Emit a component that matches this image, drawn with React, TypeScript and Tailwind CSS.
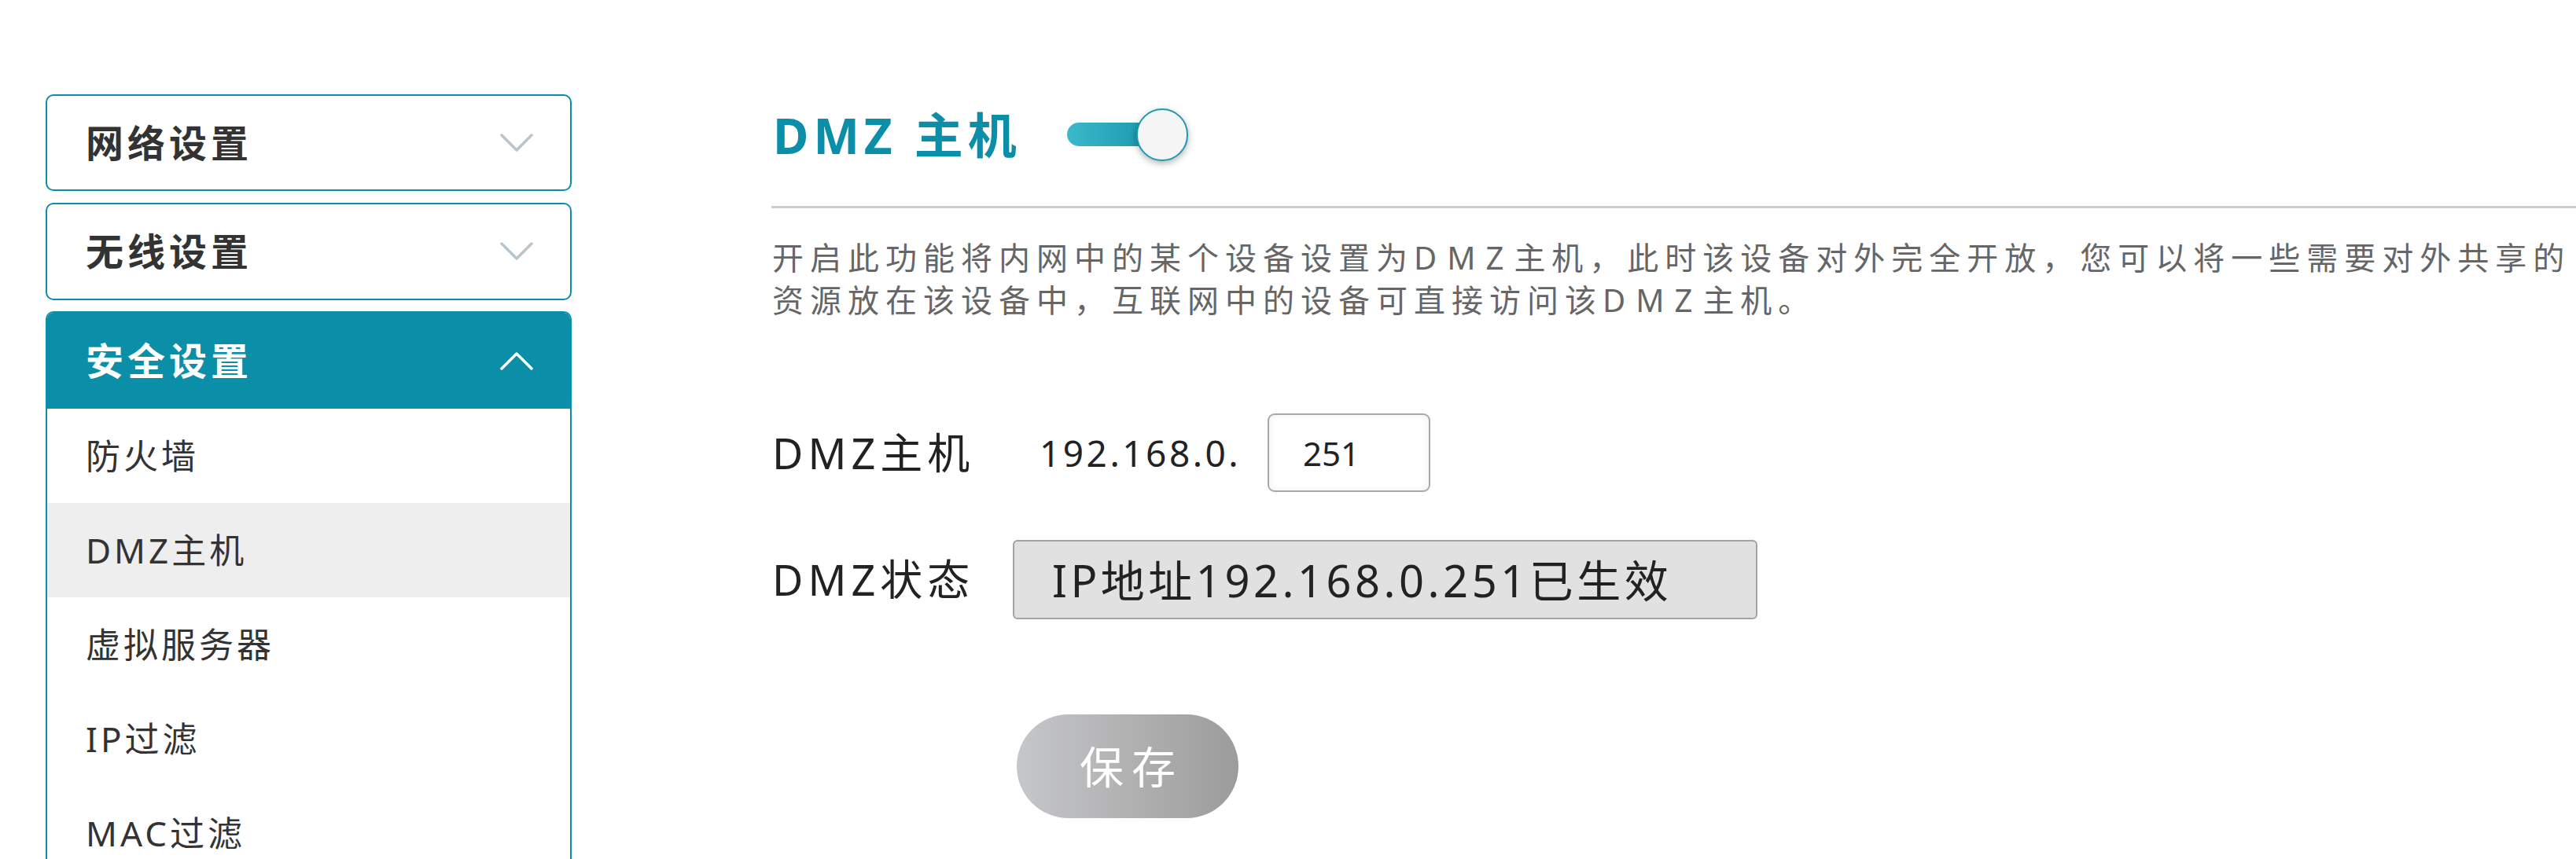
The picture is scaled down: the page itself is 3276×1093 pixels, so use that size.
import React from "react";

const FONT = { fontFamily: '"Noto Sans", "Noto Sans CJK SC", sans-serif' };

// Chevron drawn as a simple polyline
const Chevron: React.FC<{ up?: boolean; color: string }> = ({ up, color }) => (
  <svg width="42" height="24" viewBox="0 0 42 24" fill="none">
    <path
      d={up ? "M2 22 L21 3 L40 22" : "M2 2 L21 21 L40 2"}
      stroke={color}
      strokeWidth="3.5"
      strokeLinecap="round"
      strokeLinejoin="round"
    />
  </svg>
);

const menuItems = ["防火墙", "DMZ主机", "虚拟服务器", "IP过滤", "MAC过滤"];

const Sidebar: React.FC = () => (
  <div className="w-[727px] shrink-0 pl-[58px] pt-[120px] flex flex-col">
    <div className="h-[123px] border-2 border-[#0b8ea8] rounded-[10px] flex items-center justify-between pl-[49px] pr-[47px] bg-white">
      <span className="text-[48px] font-bold tracking-[5px] text-[#333]">网络设置</span>
      <Chevron color="#b9c5cd" />
    </div>
    <div className="mt-[15px] h-[124px] border-2 border-[#0b8ea8] rounded-[10px] flex items-center justify-between pl-[49px] pr-[47px] bg-white">
      <span className="text-[48px] font-bold tracking-[5px] text-[#333]">无线设置</span>
      <Chevron color="#b9c5cd" />
    </div>
    <div className="mt-[14px] flex-1 border-x-2 border-t-2 border-[#0b8ea8] rounded-t-[10px] overflow-hidden">
      <div className="h-[122px] bg-[#0b8ea8] flex items-center justify-between pl-[49px] pr-[47px]">
        <span className="text-[48px] font-bold tracking-[5px] text-white">安全设置</span>
        <Chevron up color="#ffffff" />
      </div>
      {menuItems.map((item) => (
        <div
          key={item}
          className={
            "h-[120px] flex items-center pl-[49px] " +
            (item === "DMZ主机" ? "bg-[#eeeeee]" : "bg-white")
          }
        >
          <span className="text-[44px] tracking-[4px] text-[#333]">{item}</span>
        </div>
      ))}
    </div>
  </div>
);

const Toggle: React.FC = () => (
  <div className="relative w-[154px] h-[68px] ml-[58px]">
    <div className="absolute left-0 top-[18px] w-[120px] h-[30px] rounded-full bg-linear-to-r from-[#3bb8ca] to-[#1394aa]" />
    <div className="absolute right-0 top-0 w-[66px] h-[67px] rounded-full bg-[#f5f5f5] border-2 border-[#1d9ab0] shadow-[0_3px_8px_rgba(0,0,0,0.3)]" />
  </div>
);

const App: React.FC = () => {
  return (
    <div className="w-[3276px] h-[1093px] overflow-hidden bg-white flex" style={FONT}>
      <Sidebar />
      <div className="ml-[255px] flex-1 min-w-0 pt-[120px]">
        <div className="h-[104px] flex items-center pl-[1px]">
          <h1 className="text-[62px] font-bold tracking-[6px] text-[#0b8ea8] whitespace-nowrap">DMZ 主机</h1>
          <Toggle />
        </div>
        <div className="mt-[38px] -ml-[1px] h-[3px] bg-[#cccccc]" />
        <p className="mt-[36px] text-[40px] leading-[54px] tracking-[8px] text-[#666] whitespace-nowrap">
          开启此功能将内网中的某个设备设置为<span className="tracking-[13px]">DMZ</span>主机，此时该设备对外完全开放，您可以将一些需要对外共享的
          <br />
          资源放在该设备中，互联网中的设备可直接访问该<span className="tracking-[13px]">DMZ</span>主机。
        </p>

        <div className="mt-[117px] flex items-center h-[100px]">
          <span className="w-[340px] text-[54px] tracking-[6px] text-[#222] whitespace-nowrap">DMZ主机</span>
          <span className="w-[290px] text-[46px] tracking-[3.5px] text-[#222] whitespace-nowrap">192.168.0.</span>
          <div className="w-[207px] h-[100px] border-2 border-[#a8a8a8] rounded-[9px] bg-white shadow-[inset_0_0_10px_rgba(0,0,0,0.07)] flex items-center pl-[43px]">
            <span className="text-[42px] text-[#222]">251</span>
          </div>
        </div>

        <div className="mt-[61px] flex items-center">
          <span className="w-[306px] text-[54px] tracking-[6px] text-[#222] whitespace-nowrap">DMZ状态</span>
          <div className="w-[947px] h-[101px] border-2 border-[#a3a3a3] rounded-[6px] bg-[#e1e1e1] flex items-center pl-[48px]">
            <span className="text-[56px] tracking-[4.5px] text-[#222] whitespace-nowrap">IP地址192.168.0.251已生效</span>
          </div>
        </div>

        <div className="mt-[121px] pl-[311px]">
          <button className="w-[282px] h-[132px] rounded-full bg-linear-to-r from-[#c6c7c9] to-[#9c9c9c] text-white text-[56px] tracking-[10px] pl-[10px]">
            保存
          </button>
        </div>
      </div>
    </div>
  );
};

export default App;
